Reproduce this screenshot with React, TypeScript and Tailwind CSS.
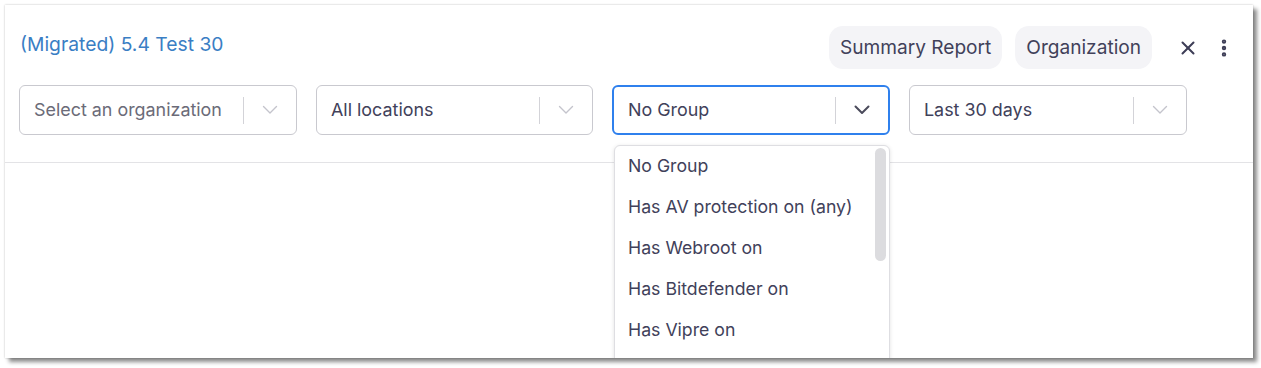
import { X, EllipsisVertical } from "lucide-react"

type SelectProps = {
  label: string
  placeholder?: boolean
  focused?: boolean
  width: string
}

function Chevron({ dark }: { dark?: boolean }) {
  return (
    <svg width="16" height="10" viewBox="0 0 16 10" fill="none">
      <polyline
        points="1.5,1.5 8,8 14.5,1.5"
        stroke={dark ? "#4b4b5c" : "#c4c4cc"}
        strokeWidth={dark ? 2 : 1.4}
        strokeLinecap="round"
        strokeLinejoin="round"
      />
    </svg>
  )
}

function Select({ label, placeholder, focused, width }: SelectProps) {
  return (
    <div
      className={`${width} h-[50px] rounded-[6px] flex items-center bg-white ${
        focused ? "border-2 border-[#2f80ed]" : "border border-[#c9c9cf]"
      }`}
    >
      <span
        className={`flex-1 pl-[14px] pt-[1px] text-[17.9px] ${
          placeholder ? "text-[#6b6b78]" : "text-[#41415a]"
        }`}
      >
        {label}
      </span>
      <span className="w-px h-[27px] bg-[#d3d3d8]" />
      <span className="w-[52px] flex justify-center">
        <Chevron dark={focused} />
      </span>
    </div>
  )
}

const groups = [
  "No Group",
  "Has AV protection on (any)",
  "Has Webroot on",
  "Has Bitdefender on",
  "Has Vipre on",
]

export default function App() {
  return (
    <div className="w-[1261px] h-[368px] bg-white pt-[5px] pl-[5px]" style={{ fontFamily: "Inter, 'Noto Sans', sans-serif" }}>
      <div className="relative w-[1248px] h-[353px] bg-white overflow-hidden shadow-[0_0_2px_rgba(0,0,0,0.25),4px_4px_4px_rgba(0,0,0,0.45)]">
        <div className="flex justify-between pl-[15px] pr-[18px] pt-[21px]">
          <div className="text-[19.3px] text-[#3a7ec4] pt-[4px]">(Migrated) 5.4 Test 30</div>
          <div className="flex items-center">
            <button className="h-[43px] px-[11px] rounded-[14px] bg-[#f4f4f7] text-[19.1px] text-[#41415a]">
              Summary Report
            </button>
            <button className="ml-[13px] h-[43px] px-[11px] rounded-[14px] bg-[#f4f4f7] text-[19.1px] text-[#41415a]">
              Organization
            </button>
            <X className="ml-[25px] w-[22px] h-[22px] text-[#3d3d56]" strokeWidth={2.2} />
            <EllipsisVertical className="ml-[14px] w-[22px] h-[22px] text-[#3d3d56]" strokeWidth={2.8} />
          </div>
        </div>

        <div className="flex gap-[19px] pl-[14px] mt-[16px]">
          <Select label="Select an organization" placeholder width="w-[278px]" />
          <Select label="All locations" width="w-[277px]" />
          <Select label="No Group" focused width="w-[278px]" />
          <Select label="Last 30 days" width="w-[278px]" />
        </div>

        <div className="mt-[27px] border-t border-[#e3e3e6]" />

        <div className="absolute left-[609px] top-[140px] w-[276px] h-[260px] bg-white border border-[#dedee2] rounded-t-[6px] shadow-[0_1px_4px_rgba(0,0,0,0.12)]">
          <div className="absolute right-[3px] top-[2px] w-[11px] h-[113px] rounded-full bg-[#dcdcdf]" />
          {groups.map((g) => (
            <div key={g} className="h-[41px] flex items-center pl-[13px] text-[17.7px] text-[#41415a]">
              {g}
            </div>
          ))}
        </div>
      </div>
    </div>
  )
}
